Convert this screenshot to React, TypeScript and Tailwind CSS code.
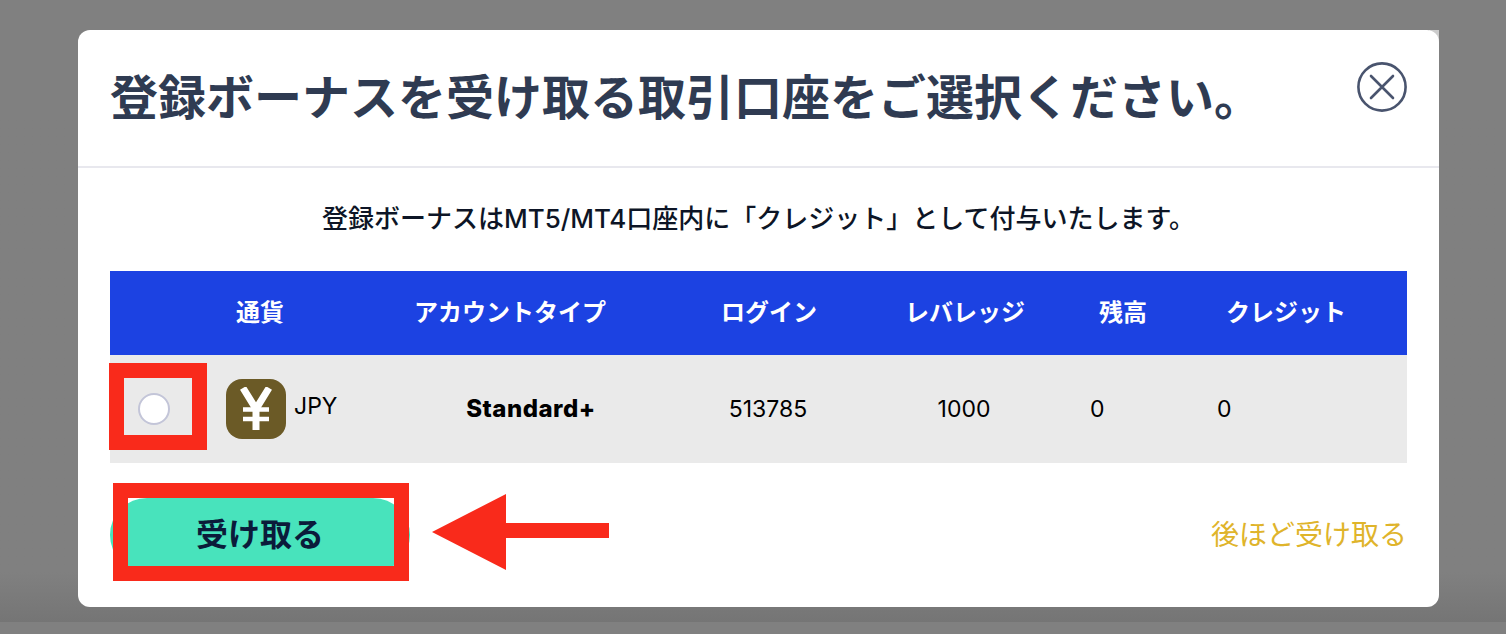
const fontStack = "font-['Inter','Noto_Sans_CJK_JP',sans-serif]";

function CloseIcon() {
  return (
    <svg width="50" height="50" viewBox="0 0 50 50" fill="none" stroke="#49546e" strokeWidth="2.6" strokeLinecap="round">
      <circle cx="25" cy="25" r="23.6" />
      <path d="M14 14 L36 36 M36 14 L14 36" />
    </svg>
  );
}

function YenIcon() {
  return (
    <div className="w-[60px] h-[60px] shrink-0 rounded-[16px] bg-[#6b5a26] flex items-center justify-center">
      <svg width="32" height="44" viewBox="0 0 32 44" fill="none" stroke="#ffffff">
        <path d="M3 1 L16 22 L29 1" strokeWidth="7" />
        <path d="M16 20 V43" strokeWidth="7" />
        <path d="M3 22.5 H29 M3 32 H29" strokeWidth="4.5" />
      </svg>
    </div>
  );
}

function Arrow() {
  return (
    <svg className="absolute left-[353px] top-[464px]" width="180" height="76" viewBox="0 0 180 76">
      <path d="M1 38 L75 0 V29 H178 V44 H75 V76 Z" fill="#f92a1b" />
    </svg>
  );
}

export default function App() {
  return (
    <div className={`h-[634px] w-full overflow-hidden flex flex-col bg-[#808080] ${fontStack}`}>
      <div className="h-[622px] shrink-0 pl-[78px] pt-[30px] bg-gradient-to-b from-[#808080] from-[92%] to-[#757575]">
        <div className="relative w-[1361px] h-[577px]">
          <div className="absolute right-0 top-0 w-[10px] h-[10px] bg-[#cccccc]" />
          <div className="relative h-full bg-white rounded-[12px] flex flex-col">
            <div className="h-[138px] shrink-0 border-b-2 border-[#e8e8ee] flex items-start justify-between pl-[32px] pr-[32px]">
              <h1 className="mt-[34px] text-[48px] leading-[68px] font-bold text-[#2f3b52] whitespace-nowrap">
                登録ボーナスを受け取る取引口座をご選択ください。
              </h1>
              <div className="mt-[32px]">
                <CloseIcon />
              </div>
            </div>

            <p className="mt-[34px] -mb-[1px] text-center text-[26px] leading-[34px] font-medium text-[#0d1526] whitespace-nowrap">
              登録ボーナスはMT5/MT4口座内に「クレジット」として付与いたします。
            </p>

            <div className="mx-[32px] mt-[36px]">
              <div className="h-[84px] bg-[#1c42e2] flex items-center text-white text-[24px] font-bold whitespace-nowrap">
                <span className="w-[120px] ml-[90px] text-center">通貨</span>
                <span className="w-[200px] ml-[90px] text-center">アカウントタイプ</span>
                <span className="w-[120px] ml-[99px] text-center">ログイン</span>
                <span className="w-[120px] ml-[76px] text-center">レバレッジ</span>
                <span className="w-[120px] ml-[38px] text-center">残高</span>
                <span className="w-[120px] ml-[43px] text-center">クレジット</span>
              </div>
              <div className="h-[108px] bg-[#eaeaea] flex items-center text-black text-[23px] whitespace-nowrap">
                <span className="w-[32px] h-[32px] ml-[28px] rounded-full bg-white border-2 border-[#c3c5d8]" />
                <span className="ml-[56px] -mt-[1px]">
                  <YenIcon />
                </span>
                <span className="ml-[8px] -mt-[5px] w-[100px]">JPY</span>
                <span className="w-[200px] ml-[37px] text-center text-[24px] tracking-[0.5px] font-extrabold">Standard+</span>
                <span className="w-[120px] ml-[77px] text-center">513785</span>
                <span className="w-[120px] ml-[76px] text-center">1000</span>
                <span className="w-[30px] ml-[66px]">0</span>
                <span className="w-[30px] ml-[97px]">0</span>
              </div>
            </div>

            <div className="mx-[32px] mt-[35px] flex items-center justify-between">
              <button className="w-[300px] h-[74px] rounded-full bg-[#48e3bc] text-[32px] font-bold text-[#0b1b3a]">
                受け取る
              </button>
              <a className="text-[28px] text-[#dfb42b] -mt-[1px]">後ほど受け取る</a>
            </div>
          </div>

          <div className="absolute left-[31px] top-[333px] w-[98px] h-[87px] border-[15px] border-[#f92a1b]" />
          <div className="absolute left-[35px] top-[453px] w-[296px] h-[98px] border-[15px] border-[#f92a1b]" />
          <Arrow />
        </div>
      </div>
      <div className="h-[12px] bg-[#808080]" />
    </div>
  );
}
